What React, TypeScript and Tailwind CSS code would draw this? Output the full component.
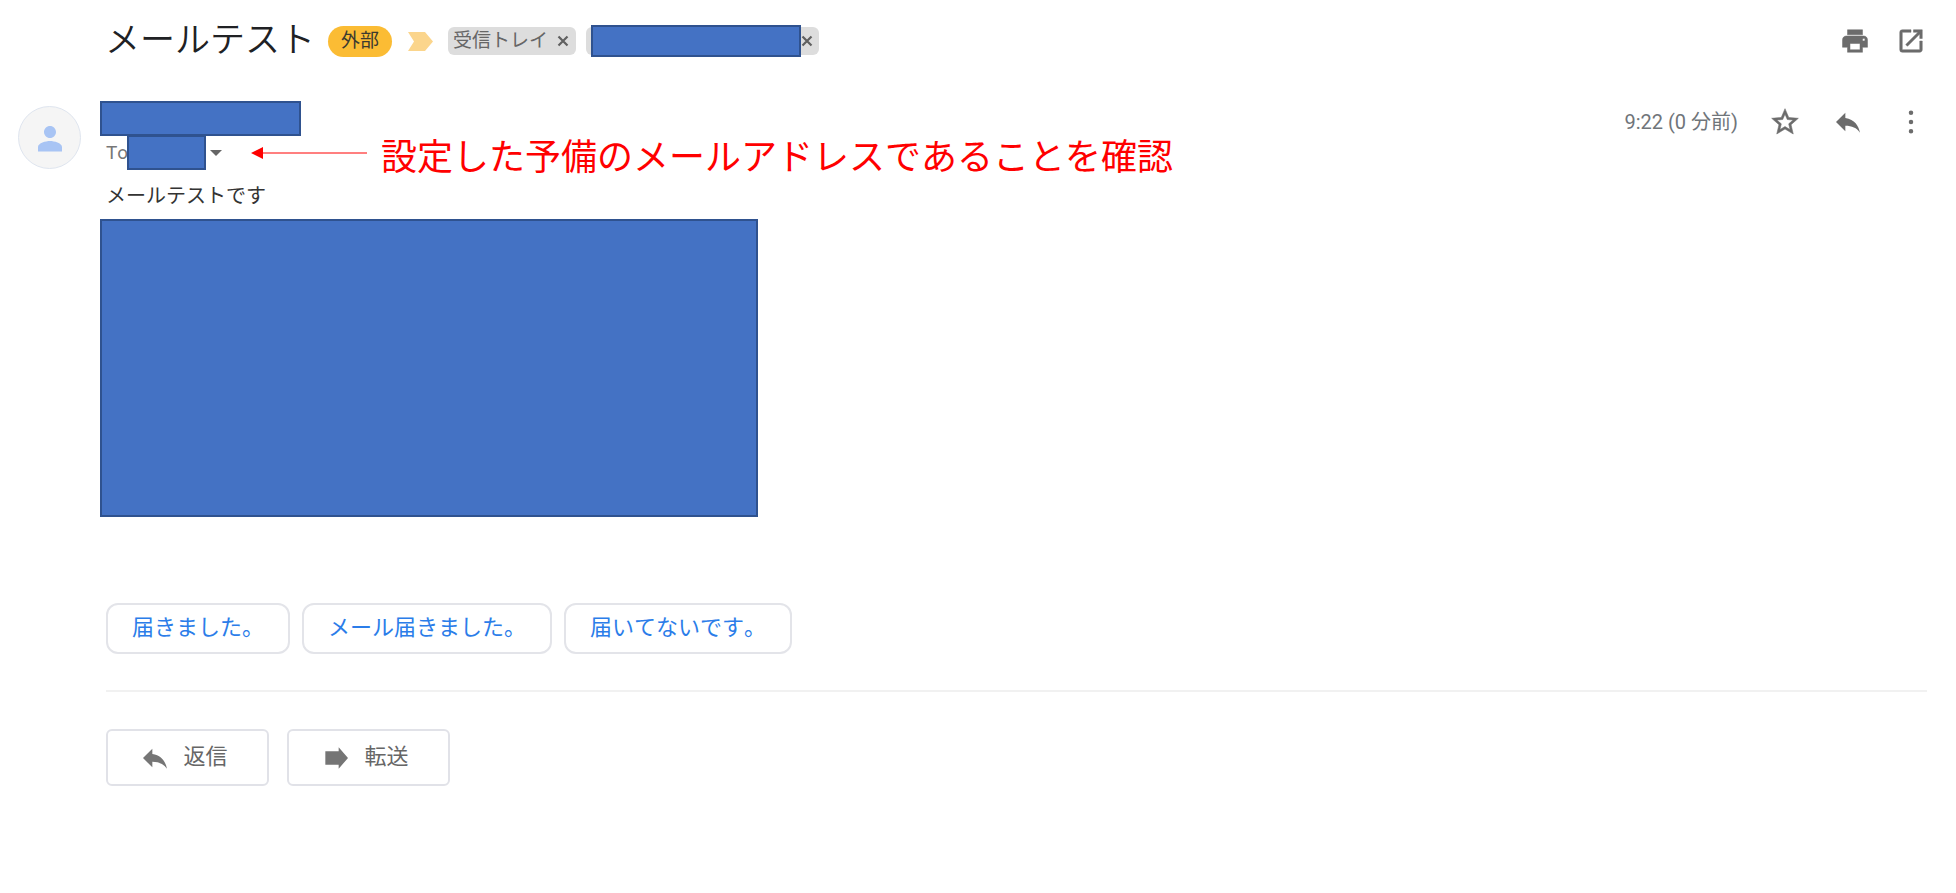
import type { ReactNode } from "react";

const quickReplies = ["届きました。", "メール届きました。", "届いてないです。"];

function Icon({ path, className = "size-8" }: { path: string; className?: string }) {
  return (
    <svg viewBox="0 0 24 24" fill="currentColor" aria-hidden="true" className={className}>
      <path d={path} />
    </svg>
  );
}

const icons = {
  print:
    "M19 8H5c-1.66 0-3 1.34-3 3v6h4v4h12v-4h4v-6c0-1.66-1.34-3-3-3zm-3 11H8v-5h8v5zm3-7c-.55 0-1-.45-1-1s.45-1 1-1 1 .45 1 1-.45 1-1 1zM18 3H6v4h12V3z",
  open: "M19 19H5V5h7V3H5a2 2 0 0 0-2 2v14a2 2 0 0 0 2 2h14c1.1 0 2-.9 2-2v-7h-2v7zM14 3v2h3.59l-9.83 9.83 1.41 1.41L19 6.41V10h2V3h-7z",
  star: "M22 9.24l-7.19-.62L12 2 9.19 8.63 2 9.24l5.46 4.73L5.82 21 12 17.27 18.18 21l-1.63-7.03L22 9.24zM12 15.4l-3.76 2.27 1-4.28-3.32-2.88 4.38-.38L12 6.1l1.71 4.04 4.38.38-3.32 2.88 1 4.28L12 15.4z",
  reply: "M10 9V5l-7 7 7 7v-4.1c5 0 8.5 1.6 11 5.1-1-5-4-10-11-11z",
  forward: "M14 7V4l7 8-7 8v-3H4V7z",
  person:
    "M12 12c2.21 0 4-1.79 4-4s-1.79-4-4-4-4 1.79-4 4 1.79 4 4 4zm0 2c-2.67 0-8 1.34-8 4v3h16v-3c0-2.66-5.33-4-8-4z",
  more: "M12 6.8a1.7 1.7 0 1 0 0-3.4 1.7 1.7 0 0 0 0 3.4zm0 6.9a1.7 1.7 0 1 0 0-3.4 1.7 1.7 0 0 0 0 3.4zm0 6.9a1.7 1.7 0 1 0 0-3.4 1.7 1.7 0 0 0 0 3.4z",
};

function IconButton({ label, children }: { label: string; children: ReactNode }) {
  return (
    <button aria-label={label} className="flex size-8 items-center justify-center text-[#6c6c6c]">
      {children}
    </button>
  );
}

function RemoveButton({ label }: { label: string }) {
  return (
    <button aria-label={label} className="text-[#606060]">
      <svg viewBox="0 0 12 12" className="size-3" stroke="currentColor" strokeWidth="2.2">
        <path d="M1.5 1.5l9 9M10.5 1.5l-9 9" />
      </svg>
    </button>
  );
}

// Solid block that hides private data
function Redacted({ className }: { className: string }) {
  return <div className={`shrink-0 border-2 border-[#2f528f] bg-[#4472c4] ${className}`} />;
}

function SubjectBar() {
  return (
    <header className="flex h-[50px] items-center pr-[29px] pl-[105px]">
      <h1 className="w-[223px] text-[35px] leading-[50px] font-[350] whitespace-nowrap text-[#202124]">
        メールテスト
      </h1>
      <span className="flex h-[31px] w-16 items-center justify-center rounded-full bg-[#fbbc34] text-[19px] text-[#3c3a30]">
        外部
      </span>
      <svg viewBox="0 0 25 19" className="ml-4 h-[19px] w-[25px]" fill="#fbd58c" aria-hidden="true">
        <path d="M0 0h17l8 9.500-8 9.500H0l6-9.500z" />
      </svg>
      <div className="ml-[15px] flex h-7 w-32 items-center justify-between rounded-md bg-[#ddd] pr-[7px] pl-[5px]">
        <span className="text-[19px] leading-7 text-[#666]">受信トレイ</span>
        <RemoveButton label="受信トレイを削除" />
      </div>
      <div className="ml-2.5 flex h-7 items-center rounded-md bg-[#ddd] pr-1.5 pl-[5px]">
        <Redacted className="h-8 w-[210px]" />
        <RemoveButton label="ラベルを削除" />
      </div>
      <div className="ml-auto flex gap-6">
        <IconButton label="印刷">
          <Icon path={icons.print} className="size-[30px] stroke-current stroke-[0.4]" />
        </IconButton>
        <IconButton label="新しいウィンドウで開く">
          <Icon path={icons.open} className="size-[30px] stroke-current stroke-[0.4]" />
        </IconButton>
      </div>
    </header>
  );
}

function RecipientLine() {
  return (
    <div className="-mt-px flex h-[35px] items-center">
      <span className="w-[27px] pt-0.5 pl-1.5 text-[19px] text-[#777]">To</span>
      <Redacted className="h-[35px] w-[79px]" />
      <button aria-label="詳細を表示" className="ml-1 text-[#666]">
        <svg viewBox="0 0 12 6" className="h-1.5 w-3" fill="currentColor">
          <path d="M0 0h12L6 6z" />
        </svg>
      </button>
      <svg viewBox="0 0 116 12" className="ml-[29px] h-3 w-[116px] shrink-0" fill="#f00" aria-hidden="true">
        <path d="M0 6L12 0v5.500h104v1H12V12z" />
      </svg>
      <p className="ml-3.5 pt-2.5 text-[36px] leading-9 whitespace-nowrap text-[#f00]">
        設定した予備のメールアドレスであることを確認
      </p>
    </div>
  );
}

function MessageHead() {
  return (
    <div className="flex items-start pr-[29px]">
      <div className="mt-[5px] ml-[18px] flex size-[63px] items-center justify-center rounded-full border border-[#dfe5ef] bg-[#f5f5f5] text-[#a8c4f4]">
        <Icon path={icons.person} className="size-9" />
      </div>
      <div className="ml-[19px]">
        <Redacted className="h-[35px] w-[201px]" />
        <RecipientLine />
      </div>
      <div className="mt-[5px] ml-auto flex items-center gap-[31px]">
        <time className="text-[20px] leading-8 text-[#70757a]">9:22 (0 分前)</time>
        <IconButton label="スターを付ける">
          <Icon path={icons.star} className="size-8 stroke-current stroke-[0.4]" />
        </IconButton>
        <IconButton label="返信">
          <Icon path={icons.reply} />
        </IconButton>
        <IconButton label="その他">
          <Icon path={icons.more} />
        </IconButton>
      </div>
    </div>
  );
}

function ReplyButton({ path, children }: { path: string; children: ReactNode }) {
  return (
    <button className="flex h-[57px] w-[163px] items-center justify-center gap-3 rounded-md border-2 border-[#e1e2e8] pr-2 text-[22px] text-[#666]">
      <Icon path={path} className="size-8 text-[#757575]" />
      <span className="pb-0.5">{children}</span>
    </button>
  );
}

export default function App() {
  return (
    <main className="bg-white pt-4 pb-8 font-['Roboto','Noto_Sans_CJK_JP',sans-serif] [font-kerning:none]">
      <SubjectBar />
      <article className="mt-[35px]">
        <MessageHead />
        <p className="pt-1 pb-px pl-[106px] text-[20px] leading-[44px] text-[#333]">メールテストです</p>
        <Redacted className="ml-[100px] h-[298px] max-w-[658px]" />
      </article>
      <div className="mt-[86px] mr-[29px] ml-[106px]">
        <div className="flex flex-wrap gap-3">
          {quickReplies.map((text) => (
            <button
              key={text}
              className="h-[51px] rounded-xl border-2 border-[#e3e4e9] px-6 pb-0.5 text-[22px] text-[#2b7de9]"
            >
              {text}
            </button>
          ))}
        </div>
        <hr className="mt-9 border-t-2 border-[#f1f1f1]" />
        <div className="mt-[37px] flex gap-[18px]">
          <ReplyButton path={icons.reply}>返信</ReplyButton>
          <ReplyButton path={icons.forward}>転送</ReplyButton>
        </div>
      </div>
    </main>
  );
}
